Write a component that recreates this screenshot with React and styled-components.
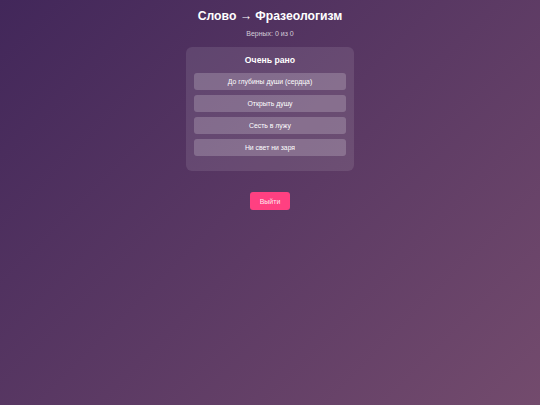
import React from 'react';
import styled, { createGlobalStyle } from 'styled-components';

const GlobalStyle = createGlobalStyle`
  html, body {
    margin: 0;
    padding: 0;
  }
  body {
    min-height: 100vh;
    font-family: "Liberation Sans", Arial, sans-serif;
    background: linear-gradient(135deg, #42275a 0%, #734b6d 100%);
    background-attachment: fixed;
    color: #fff;
  }
`;

const options = [
  'До глубины души (сердца)',
  'Открыть душу',
  'Сесть в лужу',
  'Ни свет ни заря',
];

const App = () => {
  return (
    <>
      <GlobalStyle />
      <Page>
        <Title>Слово → Фразеологизм</Title>
        <Score>Верных: 0 из 0</Score>
        <Card>
          <Word>Очень рано</Word>
          {options.map((opt) => (
            <Option key={opt}>{opt}</Option>
          ))}
        </Card>
        <ExitBtn>Выйти</ExitBtn>
      </Page>
    </>
  );
};

export default App;

const Page = styled.div`
  display: flex;
  flex-direction: column;
  align-items: center;
  padding-top: 8px;
  min-height: 100vh;
  box-sizing: border-box;
`;

const Title = styled.h1`
  margin: 0;
  font-size: 12.2px;
  line-height: 16px;
  font-weight: bold;
  color: #fff;
`;

const Score = styled.div`
  margin-top: 6px;
  font-size: 7px;
  line-height: 8px;
  color: rgba(255, 255, 255, 0.75);
`;

const Card = styled.div`
  margin-top: 9px;
  width: 168px;
  box-sizing: border-box;
  padding: 8px 8px 10px;
  border-radius: 6px;
  background: rgba(255, 255, 255, 0.1);
  display: flex;
  flex-direction: column;
`;

const Word = styled.h2`
  margin: 0 0 7px;
  text-align: center;
  font-size: 8.7px;
  line-height: 11px;
  font-weight: bold;
  color: #fff;
`;

const Option = styled.button`
  height: 17px;
  margin-bottom: 5px;
  border: none;
  border-radius: 3px;
  background: rgba(255, 255, 255, 0.2);
  color: #fff;
  font-family: "Liberation Sans", Arial, sans-serif;
  font-size: 6.85px;
  padding: 0;
  cursor: pointer;
`;

const ExitBtn = styled.button`
  margin-top: 21px;
  height: 18px;
  padding: 0 9.5px;
  border: none;
  border-radius: 3px;
  background: #ff4081;
  color: rgba(255, 255, 255, 0.9);
  font-family: "Liberation Sans", Arial, sans-serif;
  font-size: 7px;
  cursor: pointer;
`;
